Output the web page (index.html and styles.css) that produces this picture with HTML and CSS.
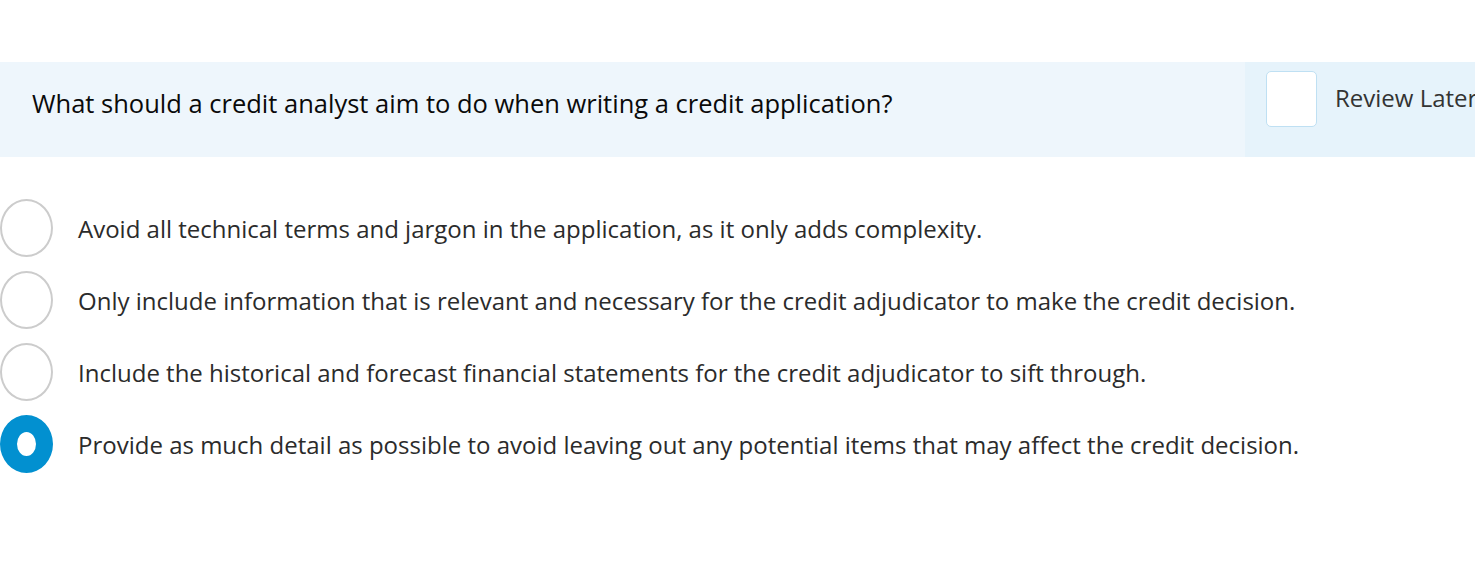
FILE: index.html
```html
<!DOCTYPE html>
<html lang="en">
<head>
    <meta charset="UTF-8">
    <title>Question</title>
    <link rel="stylesheet" href="styles.css">
</head>
<body>
<div class="question-bar">
    <div class="question-text">What should a credit analyst aim to do when writing a credit application?</div>
    <label class="review">
        <span class="review-box"></span>
        <span class="review-label">Review Later</span>
    </label>
</div>
<ul class="answers">
    <li class="answer"><span class="radio"></span><span class="answer-text">Avoid all technical terms and jargon in the application, as it only adds complexity.</span></li>
    <li class="answer"><span class="radio"></span><span class="answer-text">Only include information that is relevant and necessary for the credit adjudicator to make the credit decision.</span></li>
    <li class="answer"><span class="radio"></span><span class="answer-text">Include the historical and forecast financial statements for the credit adjudicator to sift through.</span></li>
    <li class="answer"><span class="radio checked"></span><span class="answer-text">Provide as much detail as possible to avoid leaving out any potential items that may affect the credit decision.</span></li>
</ul>
</body>
</html>
```

FILE: styles.css
```css
body {
    margin: 0;
    background: #ffffff;
    font-family: "Open Sans", "Noto Sans", sans-serif;
    color: #262626;
    overflow: hidden;
}

.question-bar {
    margin-top: 62px;
    height: 95px;
    display: flex;
    background-color: #eef6fc;
}

.question-text {
    flex: 1;
    padding: 0 0 14px 32px;
    display: flex;
    align-items: center;
    font-size: 25.5px;
    color: #0a0a0a;
    white-space: nowrap;
}

.review {
    width: 230px;
    flex: none;
    display: flex;
    align-items: flex-start;
    background-color: #e6f3fb;
    padding: 9px 0 0 21px;
    box-sizing: border-box;
    white-space: nowrap;
    overflow: hidden;
}

.review-box {
    width: 49px;
    height: 54px;
    border: 1px solid #bfe0f3;
    border-radius: 5px;
    background: #ffffff;
    flex: none;
}

.review-label {
    margin-left: 18px;
    margin-top: 10px;
    font-size: 24px;
    color: #333333;
}

.answers {
    list-style: none;
    margin: 35px 0 0 0;
    padding: 0;
}

.answer {
    display: flex;
    align-items: center;
    height: 72px;
}

.radio {
    width: 49px;
    height: 54px;
    border: 2px solid #cccccc;
    border-radius: 50%;
    flex: none;
    box-sizing: content-box;
    background: #ffffff;
}

.radio.checked {
    width: 19px;
    height: 24px;
    border: 17px solid #0290d0;
}

.answer-text {
    margin-left: 25px;
    font-size: 24px;
    color: #2b2b2b;
    white-space: nowrap;
}
```
